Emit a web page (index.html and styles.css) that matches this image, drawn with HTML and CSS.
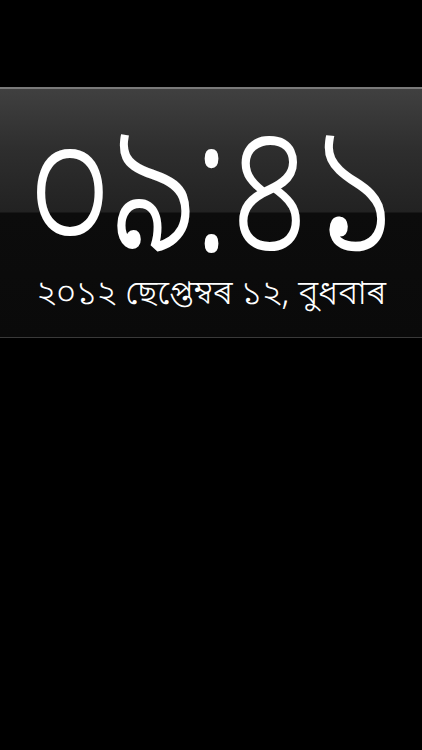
FILE: index.html
```html
<!DOCTYPE html>
<html>
<head>
<meta charset="utf-8">
<link rel="stylesheet" href="styles.css">
</head>
<body>
<div class="screen">
  <div class="band">
    <div class="time">০৯:৪১</div>
    <div class="date">২০১২ ছেপ্তেম্বৰ ১২, বুধবাৰ</div>
  </div>
</div>
</body>
</html>
```
FILE: styles.css
```css
html, body {
  margin: 0;
  padding: 0;
  background: #000;
}
.screen {
  width: 422px;
  height: 750px;
  background: #000;
  padding-top: 87px;
  box-sizing: border-box;
}
.band {
  height: 251px;
  box-sizing: border-box;
  border-top: 2px solid #7a7a7a;
  border-bottom: 1px solid #3a3a3a;
  background: linear-gradient(to bottom, #404040 0px, #2e2e2e 60px, #222 123px, #0c0c0c 124px, #0a0a0a 100%);
  display: flex;
  flex-direction: column;
  align-items: center;
  color: #fff;
  font-family: "Noto Sans Bengali", "Noto Sans", "DejaVu Sans", sans-serif;
}
.time {
  font-size: 150px;
  font-weight: 300;
  line-height: 100px;
  height: 100px;
  margin-top: 64px;
  margin-right: 4px;
  letter-spacing: -5px;
  transform: scaleY(1.25);
  white-space: nowrap;
}
.date {
  font-size: 34px;
  font-weight: 300;
  line-height: 1;
  margin-top: 26px;
  white-space: nowrap;
}
```
